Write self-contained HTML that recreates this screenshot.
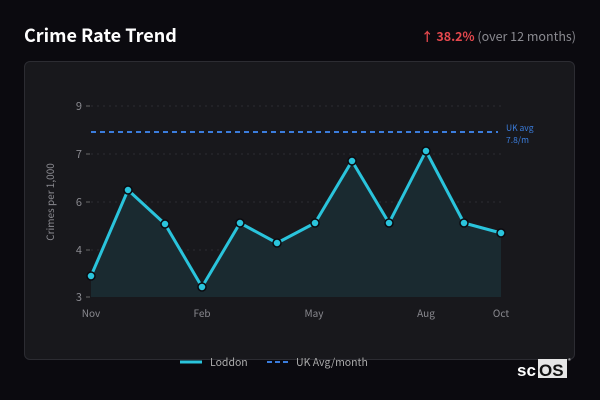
<!DOCTYPE html><html><head><style>
body{margin:0;width:600px;height:400px;background:#0b0a0f;font-family:"Noto Sans CJK SC","Liberation Sans",sans-serif;overflow:hidden;position:relative}
.t{position:absolute;left:24px;top:22px;color:#fff;font-size:18px;font-weight:bold;line-height:26px}
.r{position:absolute;right:24px;top:27px;font-size:12.5px;color:#8a8a90;line-height:18px}
.r b{color:#e5484d}
.card{position:absolute;left:24px;top:61px;width:551px;height:299px;background:#18181c;border:1px solid #2c2c32;border-radius:6px;box-sizing:border-box}
svg{position:absolute;left:0;top:0}
</style></head><body>
<div class="t">Crime Rate Trend</div>
<div class="r"><b>↑ 38.2%</b> (over 12 months)</div>
<div class="card"></div>
<svg width="600" height="400" font-family="Noto Sans CJK SC, DejaVu Sans, sans-serif">
<g stroke="#2c2c32" stroke-dasharray="2 4" stroke-width="1">
<line x1="91" y1="106" x2="501" y2="106"/><line x1="91" y1="154" x2="501" y2="154"/><line x1="91" y1="202" x2="501" y2="202"/><line x1="91" y1="250" x2="501" y2="250"/></g>
<g stroke="#666" stroke-width="1"><line x1="86" y1="106" x2="90" y2="106"/><line x1="86" y1="154" x2="90" y2="154"/><line x1="86" y1="202" x2="90" y2="202"/><line x1="86" y1="250" x2="90" y2="250"/><line x1="86" y1="297" x2="90" y2="297"/></g>
<g fill="#8a8a90" font-size="11" text-anchor="end"><text x="82" y="110">9</text><text x="82" y="158">7</text><text x="82" y="206">6</text><text x="82" y="254">4</text><text x="82" y="301">3</text></g>
<text transform="translate(54,202) rotate(-90)" fill="#8a8a90" font-size="10" text-anchor="middle">Crimes per 1,000</text>
<g fill="#8a8a90" font-size="10" text-anchor="middle"><text x="91" y="317">Nov</text><text x="202" y="317">Feb</text><text x="314" y="317">May</text><text x="426" y="317">Aug</text><text x="501" y="317">Oct</text></g>
<polygon fill="#1a2a30" points="91,297 91,276 128,190 165,224 202,287 240,223 277,243 315,223 352,161 389,223 426,151 464,223 501,233 501,297"/>
<line x1="91" y1="132" x2="498" y2="132" stroke="#3b7ddd" stroke-width="2" stroke-dasharray="5 4"/>
<text x="506" y="131" fill="#3b7ddd" font-size="8.5">UK avg</text><text x="506" y="143" fill="#3b7ddd" font-size="8.5">7.8/m</text>
<polyline fill="none" stroke="#2ac4dc" stroke-width="3" stroke-linejoin="round" points="91,276 128,190 165,224 202,287 240,223 277,243 315,223 352,161 389,223 426,151 464,223 501,233"/>
<g fill="#2ac4dc" stroke="#0b0a0f" stroke-width="1.5">
<circle cx="91" cy="276" r="4"/><circle cx="128" cy="190" r="4"/><circle cx="165" cy="224" r="4"/><circle cx="202" cy="287" r="4"/><circle cx="240" cy="223" r="4"/><circle cx="277" cy="243" r="4"/><circle cx="315" cy="223" r="4"/><circle cx="352" cy="161" r="4"/><circle cx="389" cy="223" r="4"/><circle cx="426" cy="151" r="4"/><circle cx="464" cy="223" r="4"/><circle cx="501" cy="233" r="4"/></g>
<line x1="180" y1="362" x2="202" y2="362" stroke="#2ac4dc" stroke-width="3"/>
<text x="210" y="366" fill="#aaa" font-size="10.5">Loddon</text>
<line x1="267" y1="362" x2="289" y2="362" stroke="#3b7ddd" stroke-width="2" stroke-dasharray="5 3"/>
<text x="296" y="366" fill="#aaa" font-size="10.5">UK Avg/month</text>
<rect x="538" y="359" width="29" height="19" fill="#e6e6e6"/>
<text x="517" y="376" fill="#fff" font-size="17" font-family="Liberation Sans, sans-serif" font-weight="bold">sc</text>
<text x="539" y="376" fill="#111" font-size="17" font-family="Liberation Sans, sans-serif" font-weight="bold">OS</text>
<text x="568" y="363" fill="#ccc" font-size="6">®</text>
</svg>
</body></html>
